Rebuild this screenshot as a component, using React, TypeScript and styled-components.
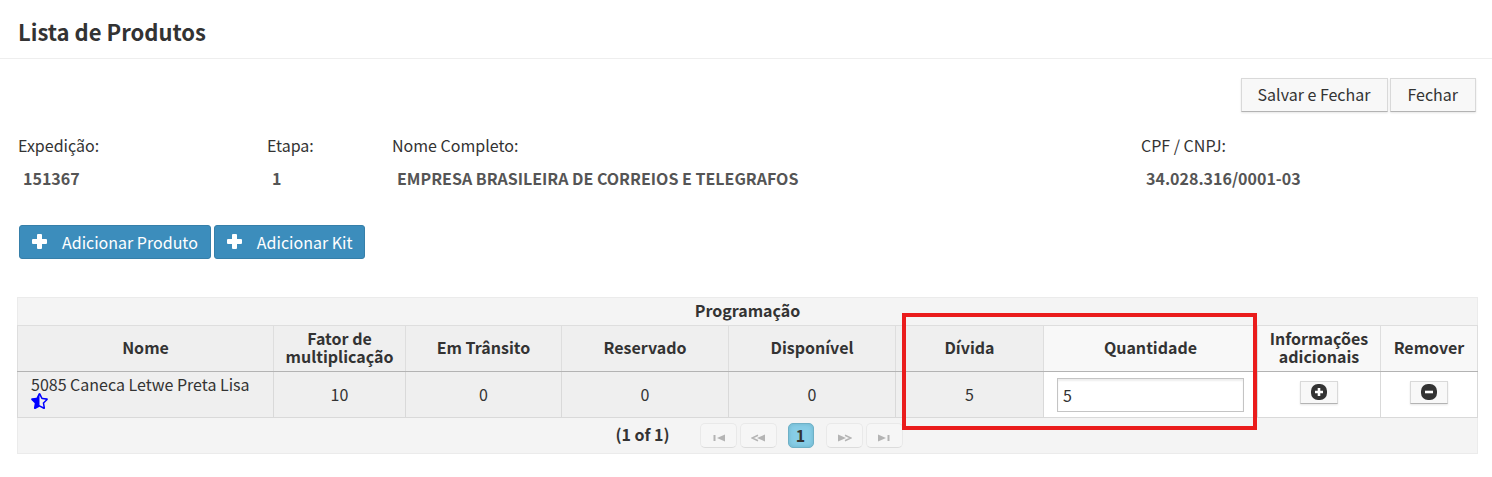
import React from 'react';
import styled, { createGlobalStyle } from 'styled-components';
import { FaStarHalfAlt } from 'react-icons/fa';

const GlobalStyle = createGlobalStyle`
  *, *::before, *::after { box-sizing: border-box; }
  body {
    margin: 0;
    background: #fff;
    color: #333;
    font-family: 'Noto Sans CJK SC', 'Open Sans', sans-serif;
    font-size: 16px;
    line-height: 20px;
  }
  button, input { font: inherit; color: inherit; }
`;

const Header = styled.header`
  padding: 18px 18px 14px;
  border-bottom: 1px solid #eee;
`;

const Title = styled.h1`
  margin: 0;
  font-size: 22px;
  line-height: 26px;
  font-weight: 700;
`;

const Content = styled.main`
  padding: 19px 14px 24px 17px;
`;

const Actions = styled.div`
  display: flex;
  justify-content: flex-end;
  gap: 2px;
  padding-right: 2px;
`;

const PlainButton = styled.button<{ $small?: boolean }>`
  display: inline-flex;
  align-items: center;
  justify-content: center;
  height: ${p => (p.$small ? 23 : 34)}px;
  padding: ${p => (p.$small ? '0 10px 2px' : '0 17px 2px 16px')};
  border: 1px solid #d9d9d9;
  border-bottom-color: #b3b3b3;
  background: #f8f8f8;
  box-shadow: 0 1px 2px rgba(0, 0, 0, 0.1);
`;

const Details = styled.dl`
  display: grid;
  grid-template-columns: 249fr 125fr 749fr 337fr;
  margin: 23px 0 37px;
  padding-left: 1px;
`;

const Term = styled.dt`
  margin-bottom: 13px;
`;

const Value = styled.dd`
  margin: 0;
  padding-left: 5px;
  color: #555;
  font-weight: 700;
`;

const Toolbar = styled.div`
  display: flex;
  gap: 3px;
  padding-left: 2px;
  margin-bottom: 38px;
`;

const AddButton = styled.button`
  display: inline-flex;
  align-items: center;
  gap: 15px;
  height: 34px;
  padding: 0 12px 1px 12px;
  border: 1px solid #367fa9;
  border-radius: 3px;
  background: #3c8dbc;
  color: #fff;
`;

const Panel = styled.section`
  border: 1px solid #ebebeb;
  background: #f4f4f4;
`;

const PanelTitle = styled.h2`
  margin: 0;
  padding: 2px 0 5px;
  font-size: 16px;
  line-height: 20px;
  text-align: center;
`;

const TableArea = styled.div`
  position: relative;
  margin: 0 -1px;
`;

const Table = styled.table`
  width: 100%;
  table-layout: fixed;
  border-collapse: collapse;
`;

const HeadCell = styled.th<{ $shaded?: boolean }>`
  height: 46px;
  padding: 0 10px 4px;
  border: 1px solid #dedede;
  border-bottom-color: #b3b3b3;
  background: ${p => (p.$shaded ? '#efefef' : '#f8f8f8')};
  line-height: 18px;
`;

const Cell = styled.td<{ $kind?: 'name' | 'number' | 'action' }>`
  height: 46px;
  padding: 0 13px;
  padding-bottom: ${p => (p.$kind === 'name' ? 6 : p.$kind === 'action' ? 4 : p.$kind ? 2 : 0)}px;
  border: 1px solid #d9d9d9;
  background: ${p => (p.$kind === 'name' || p.$kind === 'number' ? '#efefef' : '#fff')};
  line-height: 18px;
  text-align: ${p => (p.$kind === 'name' ? 'left' : 'center')};
`;

const Star = styled(FaStarHalfAlt)`
  display: block;
  width: 17px;
  height: 16px;
  color: #00f;
`;

const QuantityInput = styled.input`
  display: block;
  width: 100%;
  height: 34px;
  padding: 0 5px;
  border: 1px solid #c4c4c4;
  background: #fff;
  box-shadow: inset 0 2px 2px #eee;
`;

const Highlight = styled.div`
  position: absolute;
  top: -12px;
  bottom: -12px;
  left: 60.6%;
  right: 15.1%;
  border: 4px solid #ea1c1c;
  pointer-events: none;
`;

const Pager = styled.nav`
  display: flex;
  align-items: center;
  justify-content: center;
  height: 35px;
  padding-left: 23px;
`;

const PageStatus = styled.span`
  margin-right: 30px;
  padding-bottom: 3px;
  font-weight: 700;
`;

const PageGroup = styled.span`
  display: flex;
  gap: 3px;
`;

const PageButton = styled.button`
  display: inline-flex;
  align-items: center;
  justify-content: center;
  width: 37px;
  height: 25px;
  padding: 4px 0 0;
  border: 1px solid #e9e9e9;
  border-bottom-color: #dcdcdc;
  border-radius: 5px;
  background: #f6f6f6;
  color: #b4b4b4;
`;

const CurrentPage = styled.button`
  width: 26px;
  height: 25px;
  margin: 0 12px 0 11px;
  padding: 0 0 2px;
  border: 1px solid #6fb0c6;
  border-radius: 5px;
  background: #87cde6;
  box-shadow: inset 0 0 4px #6db3ca;
  font-weight: 700;
  line-height: 20px;
`;

const PlusIcon = () => (
  <svg width="15" height="15" viewBox="0 0 15 15" aria-hidden="true">
    <path
      fill="currentColor"
      d="M6 0h3a1 1 0 0 1 1 1v4h4a1 1 0 0 1 1 1v3a1 1 0 0 1-1 1h-4v4a1 1 0 0 1-1 1H6a1 1 0 0 1-1-1v-4H1a1 1 0 0 1-1-1V6a1 1 0 0 1 1-1h4V1a1 1 0 0 1 1-1z"
    />
  </svg>
);

const RoundIcon = ({ plus }: { plus?: boolean }) => (
  <svg width="16" height="16" viewBox="0 0 16 16" aria-hidden="true">
    <rect width="16" height="16" rx="7" fill="#333" />
    <path d={plus ? 'M4 8h8M8 4v8' : 'M4 8h8'} stroke="#fff" strokeWidth="2.6" />
  </svg>
);

type PageMove = 'first' | 'previous' | 'next' | 'last';

const PageIcon = ({ move }: { move: PageMove }) => (
  <svg width="15" height="8" viewBox="0 0 15 8" aria-hidden="true">
    <g transform={move === 'next' || move === 'last' ? 'matrix(-1 0 0 1 15 0)' : undefined}>
      <path d="M14 .5v7L6 4z" fill="currentColor" />
      {move === 'first' || move === 'last' ? (
        <path d="M3.500 1v6" stroke="currentColor" strokeWidth="2" />
      ) : (
        <path d="M7 1.200L1 4l6 2.800" fill="none" stroke="currentColor" strokeWidth="1.500" />
      )}
    </g>
  </svg>
);

const details = [
  ['Expedição:', '151367'],
  ['Etapa:', '1'],
  ['Nome Completo:', 'EMPRESA BRASILEIRA DE CORREIOS E TELEGRAFOS'],
  ['CPF / CNPJ:', '34.028.316/0001-03'],
];

const columns = [
  { label: 'Nome', width: 256, shaded: true },
  { label: 'Fator de multiplicação', width: 132, shaded: true },
  { label: 'Em Trânsito', width: 156, shaded: true },
  { label: 'Reservado', width: 167, shaded: true },
  { label: 'Disponível', width: 167, shaded: true },
  { label: 'Dívida', width: 148, shaded: true },
  { label: 'Quantidade', width: 214 },
  { label: 'Informações adicionais', width: 123 },
  { label: 'Remover', width: 97 },
];

export default function App() {
  return (
    <>
      <GlobalStyle />
      <Header>
        <Title>Lista de Produtos</Title>
      </Header>
      <Content>
        <Actions>
          <PlainButton type="button">Salvar e Fechar</PlainButton>
          <PlainButton type="button">Fechar</PlainButton>
        </Actions>
        <Details>
          {details.map(([term, value]) => (
            <div key={term}>
              <Term>{term}</Term>
              <Value>{value}</Value>
            </div>
          ))}
        </Details>
        <Toolbar>
          <AddButton type="button">
            <PlusIcon />
            Adicionar Produto
          </AddButton>
          <AddButton type="button">
            <PlusIcon />
            Adicionar Kit
          </AddButton>
        </Toolbar>
        <Panel>
          <PanelTitle>Programação</PanelTitle>
          <TableArea>
            <Table>
              <colgroup>
                {columns.map(c => (
                  <col key={c.label} width={c.width} />
                ))}
              </colgroup>
              <thead>
                <tr>
                  {columns.map(c => (
                    <HeadCell key={c.label} scope="col" $shaded={c.shaded}>
                      {c.label}
                    </HeadCell>
                  ))}
                </tr>
              </thead>
              <tbody>
                <tr>
                  <Cell $kind="name">
                    5085 Caneca Letwe Preta Lisa
                    <Star aria-hidden="true" />
                  </Cell>
                  <Cell $kind="number">10</Cell>
                  <Cell $kind="number">0</Cell>
                  <Cell $kind="number">0</Cell>
                  <Cell $kind="number">0</Cell>
                  <Cell $kind="number">5</Cell>
                  <Cell>
                    <QuantityInput type="text" defaultValue="5" aria-label="Quantidade" />
                  </Cell>
                  <Cell $kind="action">
                    <PlainButton type="button" $small aria-label="Informações adicionais">
                      <RoundIcon plus />
                    </PlainButton>
                  </Cell>
                  <Cell $kind="action">
                    <PlainButton type="button" $small aria-label="Remover">
                      <RoundIcon />
                    </PlainButton>
                  </Cell>
                </tr>
              </tbody>
            </Table>
            <Highlight />
          </TableArea>
          <Pager>
            <PageStatus>(1 of 1)</PageStatus>
            <PageGroup>
              <PageButton type="button" aria-label="Primeira">
                <PageIcon move="first" />
              </PageButton>
              <PageButton type="button" aria-label="Anterior">
                <PageIcon move="previous" />
              </PageButton>
            </PageGroup>
            <CurrentPage type="button">1</CurrentPage>
            <PageGroup>
              <PageButton type="button" aria-label="Próxima">
                <PageIcon move="next" />
              </PageButton>
              <PageButton type="button" aria-label="Última">
                <PageIcon move="last" />
              </PageButton>
            </PageGroup>
          </Pager>
        </Panel>
      </Content>
    </>
  );
}
